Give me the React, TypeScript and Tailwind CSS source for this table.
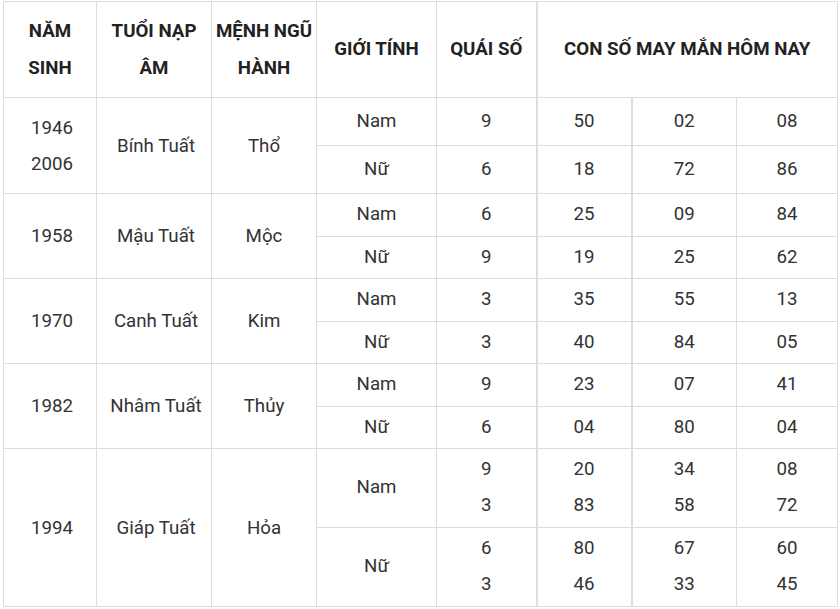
import React from 'react';

type Sub = { gender: string; quai: string[]; nums: string[][]; h: string };
type Group = { years: string[]; tuoi: string; menh: string; subs: Sub[] };

const DATA: Group[] = [
  {
    years: ['1946', '2006'],
    tuoi: 'Bính Tuất',
    menh: 'Thổ',
    subs: [
      { gender: 'Nam', quai: ['9'], nums: [['50', '02', '08']], h: 'h-[48px]' },
      { gender: 'Nữ', quai: ['6'], nums: [['18', '72', '86']], h: 'h-[48px]' },
    ],
  },
  {
    years: ['1958'],
    tuoi: 'Mậu Tuất',
    menh: 'Mộc',
    subs: [
      { gender: 'Nam', quai: ['6'], nums: [['25', '09', '84']], h: 'h-[43px]' },
      { gender: 'Nữ', quai: ['9'], nums: [['19', '25', '62']], h: 'h-[42px]' },
    ],
  },
  {
    years: ['1970'],
    tuoi: 'Canh Tuất',
    menh: 'Kim',
    subs: [
      { gender: 'Nam', quai: ['3'], nums: [['35', '55', '13']], h: 'h-[43px]' },
      { gender: 'Nữ', quai: ['3'], nums: [['40', '84', '05']], h: 'h-[42px]' },
    ],
  },
  {
    years: ['1982'],
    tuoi: 'Nhâm Tuất',
    menh: 'Thủy',
    subs: [
      { gender: 'Nam', quai: ['9'], nums: [['23', '07', '41']], h: 'h-[43px]' },
      { gender: 'Nữ', quai: ['6'], nums: [['04', '80', '04']], h: 'h-[42px]' },
    ],
  },
  {
    years: ['1994'],
    tuoi: 'Giáp Tuất',
    menh: 'Hỏa',
    subs: [
      {
        gender: 'Nam',
        quai: ['9', '3'],
        nums: [
          ['20', '34', '08'],
          ['83', '58', '72'],
        ],
        h: 'h-[79px]',
      },
      {
        gender: 'Nữ',
        quai: ['6', '3'],
        nums: [
          ['80', '67', '60'],
          ['46', '33', '45'],
        ],
        h: 'h-[79px]',
      },
    ],
  },
];

const cell = 'border border-[#dddddd] text-center align-middle p-0';

const Lines = ({ items }: { items: string[] }) => (
  <>
    {items.map((t, i) => (
      <div key={i}>{t}</div>
    ))}
  </>
);

const App = () => {
  return (
    <div className="w-[840px] h-[609px] bg-white pt-px pl-[3px] font-['Roboto',sans-serif] text-[18.7px] leading-[36px] text-[#333333]">
      <table className="table-fixed border-collapse w-[834px]">
        <colgroup>
          <col className="w-[93px]" />
          <col className="w-[115px]" />
          <col className="w-[105px]" />
          <col className="w-[120px]" />
          <col className="w-[100px]" />
          <col className="w-[95px]" />
          <col className="w-[105px]" />
          <col className="w-[101px]" />
        </colgroup>
        <thead>
          <tr className="h-[96px] font-bold text-[#222222] leading-[37px]">
            <th className={`${cell} px-[2px]`}>NĂM SINH</th>
            <th className={`${cell} px-[2px]`}>TUỔI NẠP ÂM</th>
            <th className={`${cell} px-[2px]`}>MỆNH NGŨ HÀNH</th>
            <th className={`${cell} px-[2px]`}>GIỚI TÍNH</th>
            <th className={`${cell} px-[2px]`}>QUÁI SỐ</th>
            <th colSpan={3} className={`${cell} border-l-2 px-[2px]`}>
              CON SỐ MAY MẮN HÔM NAY
            </th>
          </tr>
        </thead>
        <tbody>
          {DATA.map((g) =>
            g.subs.map((s, si) => (
              <tr key={g.tuoi + si} className={s.h}>
                {si === 0 && (
                  <>
                    <td rowSpan={2} className={`${cell} pl-[4px]`}>
                      <Lines items={g.years} />
                    </td>
                    <td rowSpan={2} className={`${cell} pl-[4px]`}>
                      {g.tuoi}
                    </td>
                    <td rowSpan={2} className={cell}>
                      {g.menh}
                    </td>
                  </>
                )}
                <td className={`${cell} pb-[2px]`}>{s.gender}</td>
                <td className={`${cell} pb-[2px]`}>
                  <Lines items={s.quai} />
                </td>
                <td className={`${cell} border-l-2 pb-[2px]`}>
                  <Lines items={s.nums.map((r) => r[0])} />
                </td>
                <td className={`${cell} border-l-2 pb-[2px]`}>
                  <Lines items={s.nums.map((r) => r[1])} />
                </td>
                <td className={`${cell} pb-[2px]`}>
                  <Lines items={s.nums.map((r) => r[2])} />
                </td>
              </tr>
            ))
          )}
        </tbody>
      </table>
    </div>
  );
};

export default App;
